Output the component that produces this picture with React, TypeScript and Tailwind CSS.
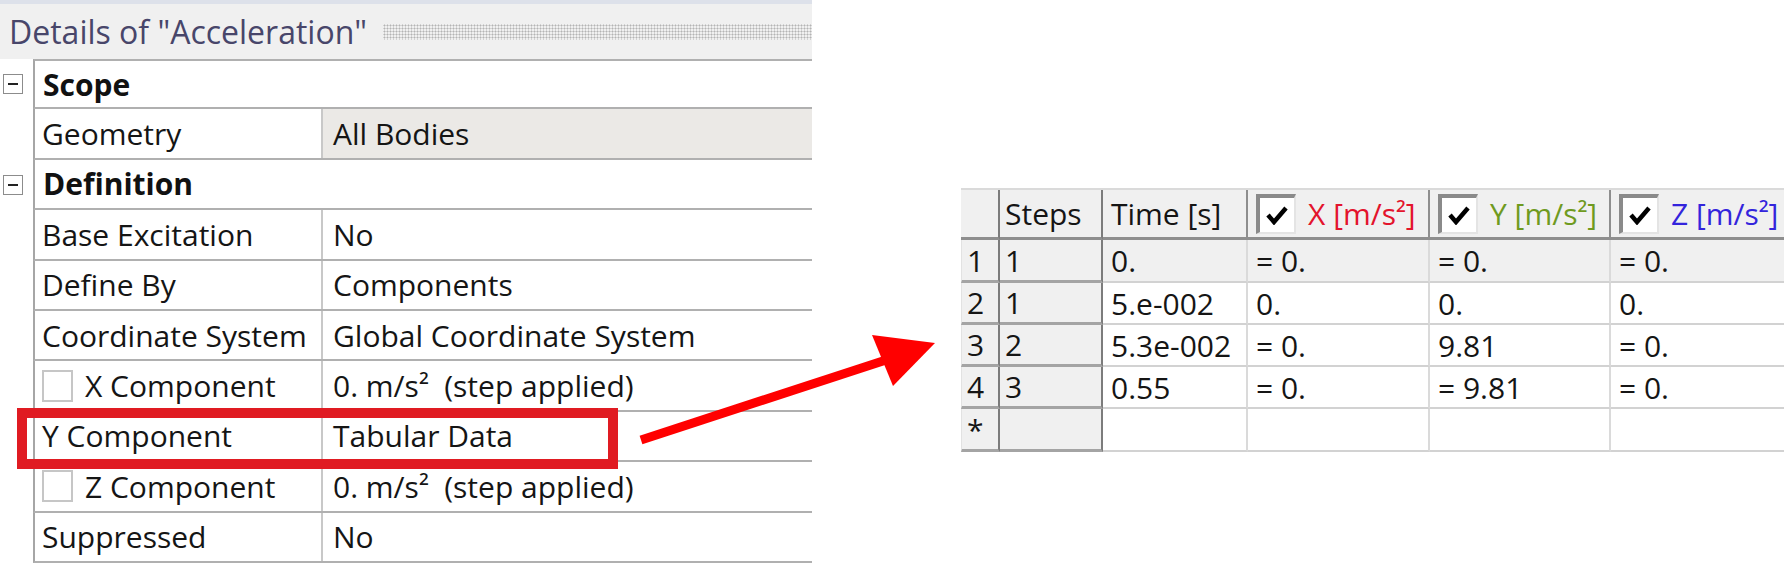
import React from "react";

type Row = {
  label: string;
  value?: React.ReactNode;
  group?: boolean;
  shaded?: boolean;
  check?: boolean;
};

const stepApplied = (
  <span className="whitespace-pre">
    0. m/s<sup className="relative -top-[13px] text-[17px] font-semibold">2</sup>
    {"  (step applied)"}
  </span>
);

const rows: Row[] = [
  { label: "Scope", group: true },
  { label: "Geometry", value: "All Bodies", shaded: true },
  { label: "Definition", group: true },
  { label: "Base Excitation", value: "No" },
  { label: "Define By", value: "Components" },
  { label: "Coordinate System", value: "Global Coordinate System" },
  { label: "X Component", value: stepApplied, check: true },
  { label: "Y Component", value: "Tabular Data" },
  { label: "Z Component", value: stepApplied, check: true },
  { label: "Suppressed", value: "No" },
];

function MinusBox() {
  return (
    <div className="w-[20px] h-[20px] border border-[#8c8c8c] bg-white flex items-center justify-center">
      <div className="w-[10px] h-[2px] bg-[#222]" />
    </div>
  );
}

function DetailsPanel() {
  return (
    <div className="w-[812px] shrink-0 flex flex-col">
      <div className="h-[4px] bg-[#dde1ea]" />
      <div className="h-[55px] bg-[#f0f0f0] flex items-center pl-[9px]">
        <span className="text-[32px] text-[#48466a] leading-none">Details of "Acceleration"</span>
        <div className="flex-1 h-[16px] ml-[16px] bg-[radial-gradient(circle,#b4b4b4_0.8px,transparent_1.2px)] bg-[length:3px_3px]" />
      </div>
      <div className="flex flex-col">
        {rows.map((r, i) => (
          <div key={i} className="flex h-[50.4px]">
            <div className="w-[33px] shrink-0 flex items-center pl-[3px]">
              {r.group && <MinusBox />}
            </div>
            <div
              className={`flex-1 flex border-l-2 border-l-[#a6a6a6] border-b-2 border-b-[#b0b0b0] ${
                i === 0 ? "border-t-2 border-t-[#b0b0b0]" : ""
              }`}
            >
              {r.group ? (
                <div className="flex items-center pl-[8px] text-[30px] font-bold text-[#111]">
                  {r.label}
                </div>
              ) : (
                <>
                  <div className="w-[288px] shrink-0 flex items-center pl-[7px] border-r-2 border-r-[#c8c8c8] text-[30px] text-[#151515]">
                    {r.check && (
                      <div className="w-[31px] h-[32px] border-2 border-[#c6c6c6] bg-white mr-[12px]" />
                    )}
                    <span>{r.label}</span>
                  </div>
                  <div
                    className={`flex-1 flex items-center pl-[10px] text-[30px] text-[#151515] ${
                      r.shaded ? "bg-[#ebe9e6]" : ""
                    }`}
                  >
                    {r.value}
                  </div>
                </>
              )}
            </div>
          </div>
        ))}
      </div>
    </div>
  );
}

function Check() {
  return (
    <div className="w-[40px] h-[40px] bg-white border-t-[4px] border-l-[4px] border-t-[#8a8a8a] border-l-[#8a8a8a] border-b-2 border-r-2 border-b-[#e4e4e4] border-r-[#e4e4e4] flex items-center justify-center mr-[12px]">
      <svg width="22" height="20" viewBox="0 0 22 20">
        <path d="M2 10 L8 17 L20 3" fill="none" stroke="#000" strokeWidth="4.5" />
      </svg>
    </div>
  );
}

function Unit({ axis, color }: { axis: string; color: string }) {
  return (
    <span className={`${color} whitespace-pre`}>
      {axis} [m/s<sup className="relative -top-[13px] text-[17px] font-semibold">2</sup>]
    </span>
  );
}

const widths = ["w-[39px]", "w-[103px]", "w-[145px]", "w-[182px]", "w-[181px]", "w-[173px]"];

const data = [
  ["1", "1", "0.", "= 0.", "= 0.", "= 0."],
  ["2", "1", "5.e-002", "0.", "0.", "0."],
  ["3", "2", "5.3e-002", "= 0.", "9.81", "= 0."],
  ["4", "3", "0.55", "= 0.", "= 9.81", "= 0."],
  ["*", "", "", "", "", ""],
];

function TabularData() {
  return (
    <div className="flex flex-col w-[823px] text-[30px] text-[#151515]">
      <div className="flex h-[52px] bg-[#f0f0f0] border-t-2 border-t-[#dadada]">
        <div className={`${widths[0]} border-r-2 border-r-[#7c7c7c] border-b-[3px] border-b-[#8e8e8e]`} />
        <div className={`${widths[1]} flex items-center pl-[5px] border-r-2 border-r-[#7c7c7c] border-b-[3px] border-b-[#8e8e8e]`}>
          Steps
        </div>
        <div className={`${widths[2]} flex items-center pl-[8px] border-r-2 border-r-[#8e8e8e] border-b-[3px] border-b-[#8e8e8e]`}>
          Time [s]
        </div>
        <div className={`${widths[3]} flex items-center pl-[8px] border-r-2 border-r-[#8e8e8e] border-b-[3px] border-b-[#8e8e8e]`}>
          <Check />
          <Unit axis="X" color="text-[#e3142c]" />
        </div>
        <div className={`${widths[4]} flex items-center pl-[8px] border-r-2 border-r-[#8e8e8e] border-b-[3px] border-b-[#8e8e8e]`}>
          <Check />
          <Unit axis="Y" color="text-[#6f9a1f]" />
        </div>
        <div className={`${widths[5]} flex items-center pl-[8px] border-b-[3px] border-b-[#8e8e8e]`}>
          <Check />
          <Unit axis="Z" color="text-[#3324dc]" />
        </div>
      </div>
      {data.map((row, ri) => (
        <div key={ri} className={`flex ${ri === 0 || ri === 4 ? "h-[43px]" : "h-[42px]"}`}>
          {row.map((cell, ci) => {
            const head = ci < 2;
            const cls = head
              ? `bg-[#f0f0f0] border-r-2 border-r-[#7c7c7c] border-b-[3px] border-b-[#a4a4a4] ${ci === 0 ? "pl-[5px] border-l border-l-[#e2e2e2]" : "pl-[5px]"}`
              : `${ri === 0 ? "bg-[#f0f0f0]" : "bg-white"} pl-[8px] border-b-2 border-b-[#d2d2d2] ${ci < 5 ? "border-r-2 border-r-[#dadada]" : ""}`;
            return (
              <div key={ci} className={`${widths[ci]} flex items-center ${cls}`}>
                {cell}
              </div>
            );
          })}
        </div>
      ))}
    </div>
  );
}

export default function App() {
  return (
    <div className="relative w-[1784px] h-[574px] bg-white overflow-hidden flex font-['Open_Sans',sans-serif]">
      <DetailsPanel />
      <div className="flex-1 pt-[188px] pl-[149px]">
        <TabularData />
      </div>

      <div className="absolute left-[17px] top-[408px] w-[601px] h-[61px] border-[10px] border-[#e01b22]" />

      <svg className="absolute left-[630px] top-[320px]" width="320" height="140" viewBox="0 0 320 140">
        <line x1="11" y1="120" x2="256" y2="40" stroke="#ff0000" strokeWidth="9" />
        <polygon points="242,15 263,66 305,23" fill="#ff0000" />
      </svg>
    </div>
  );
}
